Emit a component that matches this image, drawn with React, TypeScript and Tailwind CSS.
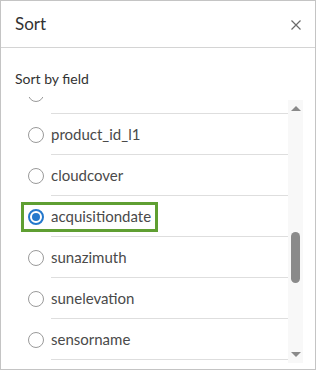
import React from "react";

const fields = [
  { name: "", selected: false },
  { name: "product_id_l1", selected: false },
  { name: "cloudcover", selected: false },
  { name: "acquisitiondate", selected: true },
  { name: "sunazimuth", selected: false },
  { name: "sunelevation", selected: false },
  { name: "sensorname", selected: false },
  { name: "", selected: false },
];

function Radio({ checked }: { checked: boolean }) {
  if (checked) {
    return (
      <span className="flex h-[16px] w-[16px] items-center justify-center rounded-full border-2 border-[#2478cc] bg-white">
        <span className="h-[8px] w-[8px] rounded-full bg-[#2478cc]" />
      </span>
    );
  }
  return <span className="h-[16px] w-[16px] rounded-full border border-[#9a9a9a] bg-white" />;
}

function FieldRow({ name, selected }: { name: string; selected: boolean }) {
  return (
    <div className="relative flex h-[41px]">
      <div className="flex w-[50px] items-center pl-[27px]">
        <Radio checked={selected} />
      </div>
      <div className="flex flex-1 items-center border-b border-[#dedede] text-[15px] text-[#4a4a4a]">
        {name}
      </div>
      {selected && (
        <div className="absolute left-[20px] top-[6px] h-[30px] w-[137px] border-[3px] border-[#5f9f32]" />
      )}
    </div>
  );
}

function Scrollbar() {
  return (
    <div className="mt-[3px] flex w-[15px] flex-col items-center bg-[#f8f8f8]">
      <div className="mt-[6px] h-0 w-0 border-x-[5px] border-b-[5px] border-x-transparent border-b-[#8a8a8a]" />
      <div className="mt-[121px] h-[51px] w-[9px] rounded-full bg-[#8a8a8a]" />
      <div className="mt-[69px] h-0 w-0 border-x-[5px] border-t-[5px] border-x-transparent border-t-[#8a8a8a]" />
    </div>
  );
}

export default function App() {
  return (
    <div
      className="flex h-[370px] w-[316px] flex-col border border-[#c4c4c4] bg-white"
      style={{ fontFamily: "Lato, 'Open Sans', sans-serif" }}
    >
      <div className="flex h-[47px] shrink-0 items-center justify-between border-b border-[#d4d4d4] pl-[14px] pr-[13px]">
        <span className="text-[17px] text-[#323232]">Sort</span>
        <svg width="12" height="12" viewBox="0 0 12 12" className="mt-[1px]">
          <path d="M1.5 1.5 L10.5 10.5 M10.5 1.5 L1.5 10.5" stroke="#6a6a6a" strokeWidth="1.2" />
        </svg>
      </div>
      <div className="pl-[14px] pt-[21px] text-[14px] leading-[20px] text-[#323232]">Sort by field</div>
      <div className="mt-[8px] flex h-[266px] overflow-hidden">
        <div className="flex-1 overflow-hidden">
          <div className="mt-[-24px]">
            {fields.map((f, i) => (
              <FieldRow key={i} name={f.name} selected={f.selected} />
            ))}
          </div>
        </div>
        <Scrollbar />
        <div className="w-[12px]" />
      </div>
    </div>
  );
}
